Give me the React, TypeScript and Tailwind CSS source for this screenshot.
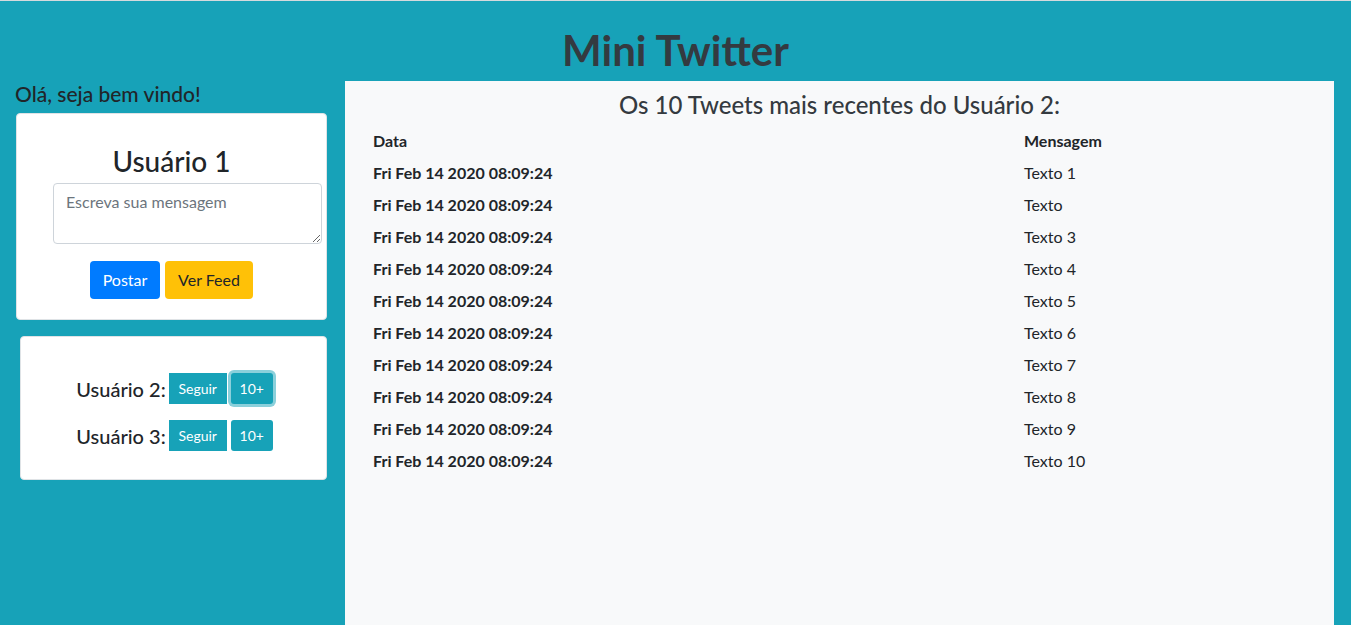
import React from 'react';

const tweets = [
  'Texto 1',
  'Texto',
  'Texto 3',
  'Texto 4',
  'Texto 5',
  'Texto 6',
  'Texto 7',
  'Texto 8',
  'Texto 9',
  'Texto 10',
];

function UserRow({ name, focused }: { name: string; focused?: boolean }) {
  return (
    <div className="flex items-center justify-center">
      <span className="text-[20px] font-medium text-[#212529] mr-[3px]">{name}</span>
      <button className="h-[31px] w-[58px] bg-[#17a2b8] text-white text-[14px]">Seguir</button>
      <button
        className={
          focused
            ? 'ml-[4px] h-[31px] w-[42px] bg-[#17a2b8] text-white text-[14px] rounded-[3px] shadow-[0_0_0_3px_#8bd0db]'
            : 'ml-[4px] h-[31px] w-[42px] bg-[#17a2b8] text-white text-[14px] rounded-[3px]'
        }
      >
        10+
      </button>
    </div>
  );
}

export default function App() {
  return (
    <div
      className="min-h-screen bg-[#17a2b8] border-t border-[#d6dadd] flex flex-col"
      style={{ fontFamily: 'Lato, "Noto Sans", sans-serif' }}
    >
      <h1 className="h-[80px] flex items-center justify-center pt-[18px] text-[42px] font-bold text-[#343a40]">
        Mini Twitter
      </h1>
      <div className="flex flex-1">
        <aside className="w-[345px] shrink-0">
          <p className="pl-[15px] pt-[1px] text-[21px] font-medium text-[#212529] leading-[24px]">
            Olá, seja bem vindo!
          </p>
          <div className="ml-[16px] mt-[7px] w-[311px] h-[207px] bg-white rounded-[4px] border border-[#dfe3e6] flex flex-col items-center">
            <h2 className="mt-[30px] text-[28px] font-medium text-[#212529] leading-[34px]">Usuário 1</h2>
            <textarea
              placeholder="Escreva sua mensagem"
              className="self-start mt-[5px] ml-[36px] w-[269px] h-[61px] rounded-[4px] border border-[#ced4da] px-[12px] py-[6px] text-[16px] text-[#495057] placeholder:text-[#6c757d] bg-white"
            />
            <div className="mt-[17px] flex gap-[5px]">
              <button className="h-[38px] w-[70px] rounded-[4px] bg-[#007bff] text-white text-[16px]">Postar</button>
              <button className="h-[38px] w-[88px] rounded-[4px] bg-[#ffc107] text-[#212529] text-[16px]">Ver Feed</button>
            </div>
          </div>
          <div className="ml-[20px] mt-[16px] w-[307px] h-[144px] bg-white rounded-[4px] border border-[#dfe3e6] flex flex-col justify-center gap-[16px] pl-[2px] pt-[8px]">
            <UserRow name="Usuário 2:" focused />
            <UserRow name="Usuário 3:" />
          </div>
        </aside>
        <main className="w-[989px] shrink-0 bg-[#f8f9fa] min-h-[544px]">
          <h3 className="pt-[9px] text-center text-[24px] font-medium text-[#343a40] leading-[29px]">
            Os 10 Tweets mais recentes do Usuário 2:
          </h3>
          <table className="ml-[16px] mt-[6px] w-[961px] text-[16px] text-[#212529]">
            <thead>
              <tr className="h-[32px]">
                <th className="w-[651px] text-left px-[12px] font-bold">Data</th>
                <th className="text-left px-[12px] font-bold">Mensagem</th>
              </tr>
            </thead>
            <tbody>
              {tweets.map((t, i) => (
                <tr key={i} className="h-[32px]">
                  <td className="px-[12px] font-bold">Fri Feb 14 2020 08:09:24</td>
                  <td className="px-[12px]">{t}</td>
                </tr>
              ))}
            </tbody>
          </table>
        </main>
      </div>
    </div>
  );
}
